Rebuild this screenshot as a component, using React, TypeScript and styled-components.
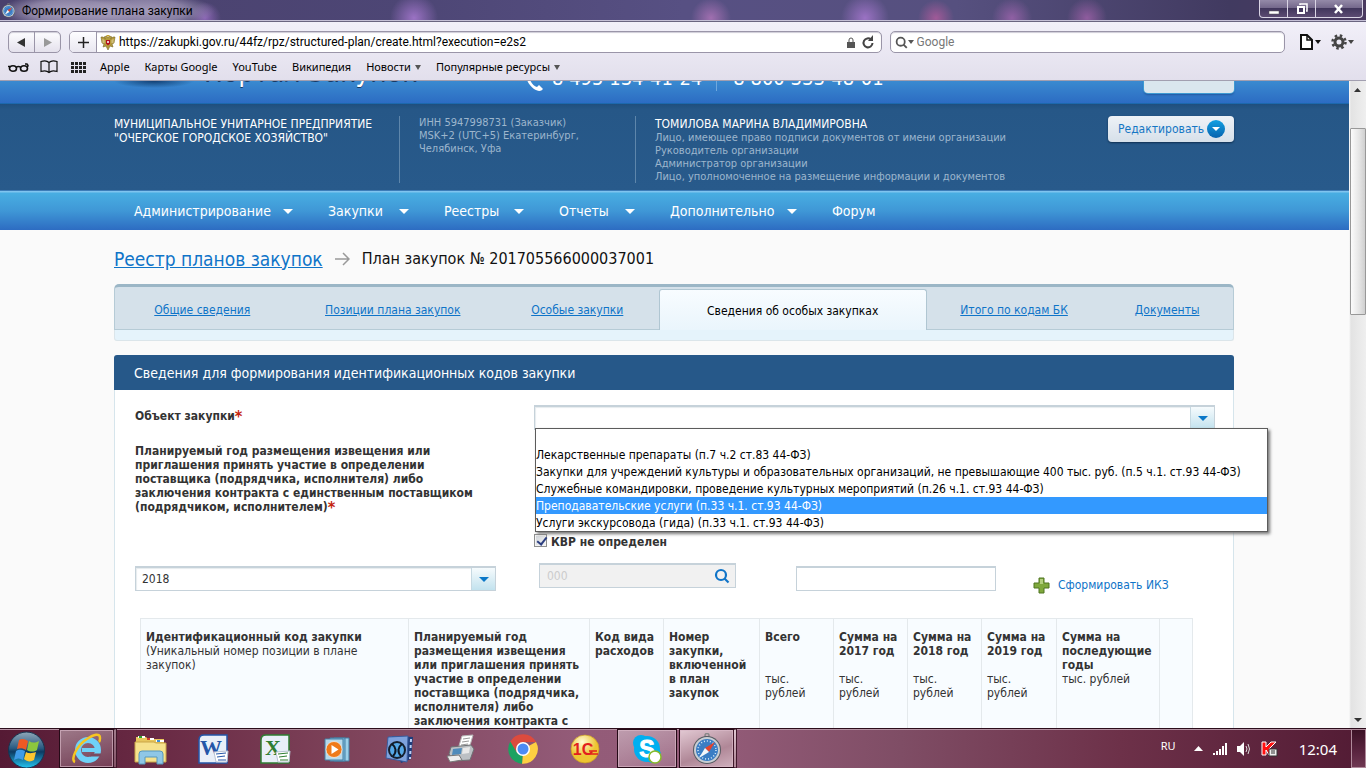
import React from 'react';
import styled, { createGlobalStyle, css } from 'styled-components';

const siteFont = `'DejaVu Sans Condensed', 'Noto Sans', sans-serif`;
const uiFont = `'Noto Sans', 'Open Sans', sans-serif`;
const barFont = `Roboto, 'Noto Sans', sans-serif`;

const GlobalStyle = createGlobalStyle`
  * { box-sizing: border-box; }
  body { margin: 0; font-family: ${siteFont}; font-size: 12px; line-height: 14px; color: #333; }
  button, input, select { font: inherit; color: inherit; margin: 0; padding: 0; border: 0; background: none; }
  a { color: #0f74c8; }
  svg { display: block; flex: none; }
`;

const Desktop = styled.div`
  height: 100vh;
  display: flex;
  flex-direction: column;
  overflow: hidden;
`;

/* ---------- browser window ---------- */

const TitleBar = styled.header`
  height: 21px;
  flex: none;
  display: flex;
  justify-content: space-between;
  border-bottom: 1px solid #c5c0d6;
  background:
    radial-gradient(ellipse 70px 18px at 70px 11px, #aba2bf, #aba2bfaa 60%, transparent),
    radial-gradient(ellipse 70px 18px at 145px 11px, #a59cbb, #a59cbbaa 60%, transparent),
    radial-gradient(circle 16px at 205px 18px, #8a64b4, transparent),
    radial-gradient(circle 24px at 414px 18px, #9b72c4, transparent),
    radial-gradient(circle 20px at 711px 18px, #a06fb0, transparent),
    radial-gradient(circle 24px at 865px 18px, #9b72c4, transparent),
    radial-gradient(circle 18px at 936px 18px, #a05a98, transparent),
    radial-gradient(circle 20px at 1012px 18px, #9060a4, transparent),
    radial-gradient(circle 20px at 1087px 18px, #8f5c9e, transparent),
    linear-gradient(90deg, #4a416d, #4d4675 30%, #575083 50%, #56507f 70%, #413a60 90%, #4a3a60);
`;
const WindowTitle = styled.div`
  display: flex;
  align-items: center;
  gap: 6px;
  padding-left: 1px;
  font: 12px/20px ${barFont};
  padding-top: 1px;
  color: #000;
`;
const WindowButtons = styled.div`
  display: flex;
  height: 18px;
  margin-right: 3px;
  border: 1px solid #d9d4e4;
  border-top: 0;
  border-radius: 0 0 4px 4px;
  background: linear-gradient(#948aa8, #75698c 45%, #41365c 50%, #5b4b72);
`;
const WindowButton = styled.button<{ $w: number }>`
  width: ${p => p.$w}px;
  display: flex;
  align-items: center;
  justify-content: center;
  border-right: 1px solid #d9d4e4;
  &:last-child { border-right: 0; }
`;
const Chrome = styled.div`
  flex: none;
  height: 60px;
  padding-top: 9px;
  border-top: 1px solid #6a6580;
  border-bottom: 1px solid #a29fb0;
  background: linear-gradient(#f2f0f9, #e2dfec);
  font: 12px/16px ${barFont};
  color: #000;
`;
const NavRow = styled.div`
  display: flex;
  align-items: center;
  padding: 0 12px 0 8px;
  height: 22px;
`;
const fieldFrame = css`
  display: flex;
  align-items: center;
  height: 22px;
  border: 1px solid #9a95a8;
  border-radius: 5px;
  background: #fff;
  box-shadow: inset 0 1px 1px #cfccd8;
`;
const BackForward = styled.div`
  ${fieldFrame}
  width: 53px;
  margin-right: 8px;
  background: linear-gradient(#fdfdff, #e4e1ec);
`;
const ChromeButton = styled.button<{ $line?: boolean }>`
  flex: 1;
  height: 20px;
  display: flex;
  align-items: center;
  justify-content: center;
  border-right: ${p => (p.$line ? '1px solid #9a95a8' : '0')};
`;
const AddressBar = styled.div`
  ${fieldFrame}
  flex: 812 1 0;
  overflow: hidden;
  padding-right: 6px;
  margin-right: 8px;
`;
const AddButton = styled.button`
  width: 27px;
  height: 20px;
  display: flex;
  align-items: center;
  justify-content: center;
  border-right: 1px solid #9a95a8;
  background: linear-gradient(#fdfdff, #e9e7f0);
  margin-right: 3px;
`;
const BarInput = styled.input`
  flex: 1;
  min-width: 0;
  height: 18px;
  padding-left: 3px;
  outline: 0;
  &::placeholder { color: #777; opacity: 1; }
`;
const SearchBar = styled.div`
  ${fieldFrame}
  flex: 393 1 0;
  padding-left: 4px;
`;
const ToolMenus = styled.div`
  display: flex;
  align-items: center;
  gap: 10px;
  margin-left: 15px;
`;
const ToolMenu = styled.button`
  display: flex;
  align-items: center;
  gap: 1px;
`;
const Bookmarks = styled.nav`
  display: flex;
  align-items: center;
  gap: 15px;
  height: 28px;
  padding-left: 8px;
  font: 11px/16px ${uiFont};
  svg { margin-right: -4px; }
`;
const Bookmark = styled.a`
  display: flex;
  align-items: center;
  gap: 4px;
  color: #000;
  text-decoration: none;
`;
const Caret = styled.i<{ $c: string; $s?: number; $h?: number }>`
  display: inline-block;
  border: ${p => p.$s ?? 3}px solid transparent;
  border-top: ${p => p.$h ?? 4}px solid ${p => p.$c};
  border-bottom: 0;
`;

/* ---------- site ---------- */

const Viewport = styled.div`
  flex: 1;
  min-height: 0;
  display: flex;
  overflow: hidden;
`;
const Page = styled.div`
  flex: 1;
  min-width: 0;
  overflow: hidden;
  background: #fafafa;
`;
const gutter = css`padding-left: 114px; padding-right: 115px;`;

const Masthead = styled.div`
  ${gutter}
  height: 23px;
  display: flex;
  align-items: flex-end;
  overflow: hidden;
  border-bottom: 1px solid #1c68ad;
  background: linear-gradient(#3a8ad0, #2c6cc3);
  color: #fff;
`;
const LogoShade = styled.div`
  width: 81px;
  height: 22px;
  margin-right: 9px;
  background: radial-gradient(ellipse 40px 7px at 40px 0, #123f73, transparent);
`;
const SiteName = styled.div`
  width: 322px;
  font-size: 28px;
  line-height: 32px;
  margin-bottom: 15px;
  white-space: nowrap;
  text-shadow: 0 1px 0 #173a66;
`;
const Phones = styled.div`
  display: flex;
  font-size: 20px;
  line-height: 22px;
  margin-bottom: 12px;
  white-space: pre;
  flex: 1;
  span + span { border-left: 1px solid #6fa9de; margin-left: 14px; padding-left: 16px; }
  svg { margin: 4px 9px 0 0; }
`;
const HeaderButton = styled.button`
  width: 90px;
  height: 22px;
  margin-bottom: 10px;
  background: #dae6ee;
  border-radius: 4px;
  box-shadow: 0 0 0 1px #3d9ad2, 0 2px 2px #2358a0;
`;
const OrgBand = styled.div`
  ${gutter}
  display: flex;
  height: 86px;
  padding-top: 12px;
  background: linear-gradient(#1f4f7e, #265787 6px, #285a8b);
  color: #9db6cd;
  font-size: 11px;
  line-height: 13px;
`;
const OrgColumn = styled.div<{ $w?: number; $line?: boolean }>`
  flex: ${p => (p.$w ? `0 0 ${p.$w}px` : '1')};
  height: 67px;
  padding-left: ${p => (p.$line ? '19px' : '0')};
  border-left: ${p => (p.$line ? '1px solid #5e86ab' : '0')};
`;
const OrgName = styled.div`
  color: #fff;
  font-size: 12px;
  line-height: 14px;
  padding-top: 1px;
`;
const EditButton = styled.button`
  width: 126px;
  height: 26px;
  display: flex;
  align-items: center;
  justify-content: space-between;
  padding: 0 9px 0 10px;
  border-radius: 4px;
  background: linear-gradient(#eef2f7, #d6e0ea);
  box-shadow: 0 1px 2px #0f2f50;
  color: #1576c4;
  font-size: 12px;
`;
const EditDot = styled.span`
  width: 18px;
  height: 18px;
  border-radius: 9px;
  display: flex;
  align-items: center;
  justify-content: center;
  background: linear-gradient(#12a0e2, #0662ae);
`;
const MainNav = styled.nav`
  ${gutter}
  display: flex;
  align-items: center;
  height: 40px;
  border-top: 1px solid #3d7db8;
  background: linear-gradient(#7fc4ef, #7fc4ef 1px, #48aee2 2px, #3f97d6 20px, #2d6cc2);
`;
const NavItem = styled.a<{ $w: number }>`
  width: ${p => p.$w}px;
  display: flex;
  align-items: center;
  justify-content: space-between;
  margin-right: 35px;
  &:first-child { margin-left: 20px; }
  color: #fff;
  font-size: 14px;
  line-height: 20px;
  text-decoration: none;
  i { margin-top: 2px; }
`;
const Main = styled.main`
  ${gutter}
`;
const Crumbs = styled.div`
  display: flex;
  align-items: center;
  height: 54px;
  padding-top: 4px;
  gap: 12px;
  font-size: 16px;
  line-height: 24px;
  color: #111;
  a { font-size: 19px; }
`;
const Tabs = styled.div`
  display: flex;
  height: 46px;
  border: 1px solid #b6cbd6;
  border-top: 3px solid #9bb6c6;
  border-radius: 5px 5px 0 0;
  background: #d5e1ea;
  padding-top: 2px;
`;
const Tab = styled.a<{ $grow: number; $active?: boolean }>`
  flex: ${p => p.$grow} 1 0;
  text-align: center;
  line-height: 43px;
  height: 41px;
  ${p =>
    p.$active &&
    css`
      color: #000;
      text-decoration: none;
      border: 1px solid #b0c6d2;
      border-bottom: 0;
      border-radius: 3px 3px 0 0;
      background: linear-gradient(#f8fcff, #eaf5fc);
    `}
`;
const TabFoot = styled.div`
  height: 11px;
  margin-bottom: 14px;
  border: 1px solid #dbe5ea;
  border-top: 0;
  border-radius: 0 0 3px 3px;
  background: #e5f3fb;
`;
const PanelTitle = styled.h2`
  margin: 0;
  height: 35px;
  padding-left: 20px;
  border-radius: 3px 3px 0 0;
  background: #265889;
  color: #fff;
  font-size: 14px;
  font-weight: 400;
  line-height: 36px;
`;
const PanelBody = styled.div`
  border: 1px solid #d6e5ec;
  border-top: 0;
  padding: 15px 18px 40px 20px;
  background: #fff;
`;
const FormGrid = styled.div`
  display: grid;
  grid-template-columns: 379px 1fr;
  column-gap: 20px;
  row-gap: 13px;
  margin-bottom: 14px;
`;
const FieldLabel = styled.label`
  font-weight: 700;
  padding-top: 4px;
  em { color: #c4240c; font-style: normal; font-size: 16px; line-height: 12px; vertical-align: -2px; }
`;
const YearLabel = styled(FieldLabel)`
  padding-top: 1px;
  height: 106px;
  max-width: 346px;
`;
const SelectBox = styled.div<{ $w?: number }>`
  position: relative;
  display: flex;
  height: 25px;
  width: ${p => (p.$w ? `${p.$w}px` : '100%')};
  border: 1px solid #c6d2da;
  border-top-width: 2px;
  background: #fff;
  box-shadow: inset 1px 1px 1px #e6ebee;
  select { flex: 1; appearance: none; padding-left: 6px; outline: 0; }
`;
const SelectArrow = styled.span`
  width: 24px;
  display: flex;
  align-items: center;
  justify-content: center;
  border-left: 1px solid #c6d9e2;
  background: linear-gradient(#f6fbfd, #c2e2ee);
  pointer-events: none;
`;
const OptionList = styled.ul`
  position: absolute;
  z-index: 2;
  top: 21px;
  left: 0;
  margin: 0;
  padding: 0;
  list-style: none;
  min-width: 733px;
  border: 1px solid #5c5c5c;
  background: #fff;
  color: #000;
  box-shadow: 2px 2px 3px #777;
  white-space: nowrap;
`;
const Option = styled.li<{ $on?: boolean }>`
  height: 17px;
  line-height: 16px;
  padding-top: 1px;
  ${p => p.$on && 'background: #3399ff; color: #fff;'}
`;
const CheckRow = styled.label`
  display: flex;
  align-items: center;
  align-self: end;
  gap: 4px;
  height: 15px;
  font-weight: 700;
`;
const Check = styled.input`
  appearance: none;
  width: 13px;
  height: 13px;
  margin-bottom: 3px;
  border: 1px solid #8e8f8f;
  background: linear-gradient(135deg, #cfd3d8, #f6f6f6);
  box-shadow: inset 0 0 0 1px #f4f4f4;
  &:checked::after {
    content: '';
    display: block;
    width: 4px;
    height: 8px;
    margin: 0 0 0 4px;
    border: solid #2c3f80;
    border-width: 0 2px 2px 0;
    transform: rotate(38deg);
  }
`;
const ControlRow = styled.div`
  display: flex;
  align-items: flex-end;
  height: 28px;
  margin-bottom: 27px;
`;
const LookupBox = styled.div`
  align-self: flex-start;
  display: flex;
  align-items: center;
  width: 197px;
  height: 25px;
  margin: 0 60px 0 43px;
  padding: 0 5px 0 7px;
  border: 1px solid #c6d2da;
  border-top-width: 2px;
  background: #f1f1f1;
  input { flex: 1; min-width: 0; color: #ccc; }
`;
const TextField = styled.input`
  width: 200px;
  height: 25px;
  border: 1px solid #c6d2da;
  border-top-width: 2px;
  margin-right: 37px;
  background: #fff;
`;
const ActionLink = styled.a`
  display: flex;
  align-items: center;
  gap: 8px;
  height: 16px;
  text-decoration: none;
  margin-bottom: -2px;
`;
const TableWrap = styled.div`
  padding: 0 22px 0 5px;
`;
const CodesTable = styled.table`
  width: 100%;
  table-layout: fixed;
  border-collapse: collapse;
  background: #f8fcff;
  th {
    height: 190px;
    padding: 11px 6px 0 5px;
    border: 1px solid #e4e9ec;
    text-align: left;
    vertical-align: top;
  }
`;
const HeadText = styled.div<{ $tall?: boolean }>`
  min-height: ${p => (p.$tall ? '42px' : '0')};
`;
const HeadNote = styled.div`
  font-weight: 400;
`;

const ScrollBar = styled.div`
  width: 17px;
  display: flex;
  flex-direction: column;
  justify-content: space-between;
  background: linear-gradient(90deg, #fafafa, #e3e3e3 2px, #efefef);
`;
const ScrollStep = styled.div`
  height: 17px;
  display: flex;
  align-items: center;
  justify-content: center;
`;
const ScrollTrack = styled.div`
  flex: 1;
  padding-top: 30px;
`;
const ScrollThumb = styled.div`
  width: 16px;
  height: 187px;
  margin-left: 1px;
  border: 1px solid #989898;
  border-radius: 1px;
  background: linear-gradient(90deg, #fbfbfb, #e4e4e4 60%, #cfcfcf);
`;

/* ---------- task bar ---------- */

const TaskBar = styled.footer`
  flex: none;
  height: 40px;
  display: flex;
  border-top: 1px solid #2b0d1b;
  box-shadow: inset 0 1px 0 #b693a4;
  background: linear-gradient(90deg, #551a34, #6a2b45 12%, #7d4259 25%, #935b78 42%, #945c79 52%, #7f4d65 66%, #6d3149 82%, #521b34);
`;
const StartButton = styled.button`
  width: 58px;
  padding-left: 7px;
`;
const TaskButton = styled.button<{ $state?: 'open' | 'active'; $stack?: boolean }>`
  width: 60px;
  height: 39px;
  margin: 0 1px;
  display: flex;
  align-items: center;
  justify-content: center;
  ${p =>
    p.$state &&
    css`
      border: 1px solid #250a17;
      box-shadow: inset 0 0 0 1px #d9b9c8aa;
      background: ${p.$state === 'active'
        ? 'linear-gradient(160deg, #e2c9d3, #b08797 60%, #cfb0bd)'
        : 'linear-gradient(160deg, #ffffff66, #ffffff1c)'};
    `}
  ${p => p.$stack && 'border-right: 4px double #40182a; width: 58px; margin-right: 3px;'}
`;
const Tray = styled.div`
  margin-left: auto;
  display: flex;
  align-items: center;
  color: #fff;
  font-family: ${uiFont};
  font-size: 11px;
`;
const Language = styled.span`
  margin-right: 18px;
  padding-bottom: 6px;
`;
const TrayIcons = styled.div`
  display: flex;
  align-items: center;
  gap: 9px;
  margin-right: 21px;
`;
const Clock = styled.time`
  font-size: 15px;
  line-height: 20px;
  margin-right: 14px;
`;
const ShowDesktop = styled.button`
  width: 15px;
  height: 39px;
  border: 1px solid #b08a9b;
  background: linear-gradient(#3c1226, #5b2540 60%, #6f3852);
`;

/* ---------- drawings ---------- */

const Compass = ({ s }: { s: number }) => (
  <svg width={s} height={s} viewBox="0 0 32 32">
    <circle cx="16" cy="2.5" r="2" fill="none" stroke="#888" strokeWidth="1.5" />
    <circle cx="16" cy="17" r="14" fill="#555b62" />
    <circle cx="16" cy="17" r="13" fill="#c9ced3" />
    <circle cx="16" cy="17" r="11" fill="#3a7dc4" />
    <circle cx="16" cy="17" r="9" fill="none" stroke="#d4e8f8" strokeWidth="1.5" strokeDasharray="1 2" />
    <path d="M24 9 18 19 14 15Z" fill="#e2432e" />
    <path d="M8 25 18 19 14 15Z" fill="#f3f6f9" />
  </svg>
);
const StartOrb = () => (
  <svg width="40" height="38" viewBox="0 0 40 38">
    <defs>
      <linearGradient id="orb" x1="0" y1="0" x2="0" y2="1">
        <stop offset="0" stopColor="#8fa7b8" /><stop offset=".45" stopColor="#2a5b82" />
        <stop offset=".55" stopColor="#0c3a62" /><stop offset="1" stopColor="#25c6f2" />
      </linearGradient>
    </defs>
    <circle cx="19.500" cy="20" r="18" fill="url(#orb)" stroke="#163450" />
    <path d="M12 10c3-2 6-1 9 1l-2 9c-3-2-6-2-9-1z" fill="#ee5a24" />
    <path d="M22 11c3 2 6 2 10 0l-2 9c-3 2-7 2-10 0z" fill="#8cc63e" />
    <path d="M9 21c3-2 6-1 9 0l-2 9c-3-2-6-2-9 0z" fill="#3f9be8" />
    <path d="M19 22c3 2 7 1 10 0l-2 8c-3 2-7 2-10-1z" fill="#fdc62f" />
  </svg>
);
const ExplorerIcon = () => (
  <svg width="32" height="32" viewBox="0 0 32 32">
    <circle cx="17" cy="17" r="10" fill="none" stroke="#6fd2f8" strokeWidth="6" />
    <path d="M11 17h17" stroke="#6fd2f8" strokeWidth="4" />
    <path d="M20 20.500h10v3H19z" fill="#7a4a60" />
    <path d="M4 29C-1 27 6 12 16 6c7-5 13-6 13-1 0 1 0 3-1 4" fill="none" stroke="#f6c521" strokeWidth="2.500" />
  </svg>
);
const FolderIcon = () => (
  <svg width="34" height="32" viewBox="0 0 34 32">
    <path d="M2 4h10l2 2h16v6H2z" fill="#e7c65c" />
    <path d="M4 3h7v2H4z" fill="#fff" /><path d="M5 3h3v2H5z" fill="#2ea12e" />
    <path d="M13 5h7v2h-7z" fill="#fff" /><path d="M13 5h3v2h-3z" fill="#d33b2b" />
    <path d="M22 7h8v2h-8z" fill="#fff" /><path d="M23 7h3v2h-3z" fill="#3b8fd9" />
    <path d="M1 9h19l2 1h10v19H1z" fill="#f6e28d" stroke="#c9a548" />
    <path d="M5 31V21q0-3 3-3h18q3 0 3 3v10h-6v-7H11v7z" fill="#8fc7e6" stroke="#5798bd" />
  </svg>
);
const OfficeIcon = ({ c, letter }: { c: string; letter: 'W' | 'X' }) => (
  <svg width="32" height="32" viewBox="0 0 32 32">
    <path d="M7 2h23v28H2V7q0-5 5-5z" fill="#e9eff8" stroke={c} strokeWidth="1.500" />
    <text x="14" y="22" textAnchor="middle" fontFamily="'Liberation Serif', serif" fontSize="22" fontWeight="700" fill={c}>{letter}</text>
    <path d="m17 19 14-1-1 11H19z" fill="#fff" stroke="#b9c3d4" />
    <path d="m19 21 10-1m-9 4 8-1m-7 4h8" stroke={c} />
  </svg>
);
const PlayerIcon = () => (
  <svg width="32" height="32" viewBox="0 0 32 32">
    <path d="M13 5h15v23H13z" fill="#9cd0ea" stroke="#457ea3" /><path d="M9 5h15v23H9z" fill="#7db9dc" stroke="#457ea3" />
    <path d="M4 6h18v21H4z" fill="#b5d9ec" stroke="#457ea3" />
    <circle cx="13" cy="16.500" r="8" fill="#ef7a1a" stroke="#fff" strokeWidth=".6" /><path d="m10.500 12 7 4.500-7 4.500z" fill="#fff" />
  </svg>
);
const FilmIcon = () => (
  <svg width="32" height="32" viewBox="0 0 32 32">
    <path d="m9 3 21 1-2 22-10 4z" fill="#1e3d7c" /><path d="m28 6-1 20" stroke="#bcd0f5" strokeWidth="2" strokeDasharray="3 3" />
    <path d="m5 4 20-1-1 26-21-4z" fill="#7ea2dd" stroke="#3a5c9d" />
    <circle cx="14" cy="17" r="9" fill="#14202f" /><circle cx="14" cy="17" r="7" fill="#56a8e6" />
    <path d="M9 11c4 3 5 8 1 12m9-12c-4 3-5 8-1 12" fill="none" stroke="#0d1725" strokeWidth="2" />
  </svg>
);
const FaxIcon = () => (
  <svg width="32" height="32" viewBox="0 0 32 32">
    <path d="m17 3 11-1-4 14H13z" fill="#fff" stroke="#b7b7b7" /><path d="m18 6 7-1m-8 4 7-1m-8 4 7-1" stroke="#999" />
    <path d="m6 14 20-2 3 4-4 11-16 1-5-7z" fill="#bcc0c4" stroke="#6d7073" />
    <path d="m8 16 9-1-1 6-9 1z" fill="#4f8bbb" /><path d="m18 15 7-1-1 6-7 1z" fill="#e9e9e9" />
    <path d="m2 23 12-1 3 5-12 2z" fill="#eee" stroke="#777" />
  </svg>
);
const ChromeIcon = () => (
  <svg width="32" height="32" viewBox="0 0 32 32">
    <path d="M16 16 29 9a14.700 14.700 0 0 1-14 21.700z" fill="#fdcf41" />
    <path d="M16 16 15 30.700A14.700 14.700 0 0 1 3.300 8.500z" fill="#1ca261" />
    <path d="M16 9h13a14.700 14.700 0 0 0-25.700-.500l6.500 11z" fill="#dd4b3e" />
    <circle cx="16" cy="16" r="7" fill="#fff" /><circle cx="16" cy="16" r="5.500" fill="#4c8bf5" />
  </svg>
);
const OneCIcon = () => (
  <svg width="32" height="32" viewBox="0 0 32 32">
    <defs><radialGradient id="gold" cx=".4" cy=".25"><stop offset="0" stopColor="#fffbd6" /><stop offset="1" stopColor="#eec532" /></radialGradient></defs>
    <circle cx="16" cy="16" r="14" fill="url(#gold)" stroke="#c99b22" strokeWidth=".7" />
    <text x="14" y="22" textAnchor="middle" fontFamily="'Liberation Sans', sans-serif" fontSize="16" fontWeight="700" fill="#e2201d">1С</text>
    <path d="M19 21h10M20 18h8" stroke="#e2201d" strokeWidth="1.500" />
  </svg>
);
const SkypeIcon = () => (
  <svg width="32" height="32" viewBox="0 0 32 32">
    <circle cx="10" cy="10" r="8" fill="#00aff0" /><circle cx="22" cy="22" r="8" fill="#00aff0" /><circle cx="16" cy="16" r="13" fill="#00aff0" />
    <text x="16" y="24" textAnchor="middle" fontFamily="'Liberation Sans', sans-serif" fontSize="23" fontWeight="700" fill="#fff" stroke="#fff">S</text>
    <circle cx="24" cy="24" r="6" fill="#fff" stroke="#86ba28" strokeWidth="1.500" />
  </svg>
);
const Eagle = () => (
  <svg width="16" height="16" viewBox="0 0 16 16">
    <path d="M8 4 6.500 2 4 3l1.500 2L3 3 1 3l1 6 2 1-1 3 3-1 2 4 2-4 3 1-1-3 2-1 1-6h-2l-2.500 2L12 3 9.500 2z" fill="#b49a3c" stroke="#7c6a25" strokeWidth=".6" />
    <path d="M6 1h4L8 3z" fill="#c8a22e" /><path d="M3 5v4m1-3v3m9-4v4m-1-3v3" stroke="#f0e6b8" strokeWidth=".6" />
    <path d="M6 6h4v3.500L8 11.500 6 9.500z" fill="#b3121d" /><circle cx="8" cy="8" r="1" fill="#fff" />
  </svg>
);
const Magnifier = ({ s, c }: { s: number; c: string }) => (
  <svg width={s} height={s} viewBox="0 0 16 16" fill="none" stroke={c} strokeWidth="2.200">
    <circle cx="7" cy="7" r="5" /><path d="m10.500 10.500 4 4" />
  </svg>
);

/* ---------- data ---------- */

const tabs = [
  { text: 'Общие сведения', grow: 175 },
  { text: 'Позиции плана закупок', grow: 207 },
  { text: 'Особые закупки', grow: 163 },
  { text: 'Сведения об особых закупках', grow: 267, active: true },
  { text: 'Итого по кодам БК', grow: 175 },
  { text: 'Документы', grow: 132 },
];
const nav = [
  { text: 'Администрирование', w: 159 },
  { text: 'Закупки', w: 81 },
  { text: 'Реестры', w: 80 },
  { text: 'Отчеты', w: 76 },
  { text: 'Дополнительно', w: 127 },
];
const options = [
  '\u00a0',
  'Лекарственные препараты (п.7 ч.2 ст.83 44-ФЗ)',
  'Закупки для учреждений культуры и образовательных организаций, не превышающие 400 тыс. руб. (п.5 ч.1. ст.93 44-ФЗ)',
  'Служебные командировки, проведение культурных мероприятий (п.26 ч.1. ст.93 44-ФЗ)',
  'Преподавательские услуги (п.33 ч.1. ст.93 44-ФЗ)',
  'Услуги экскурсовода (гида) (п.33 ч.1. ст.93 44-ФЗ)',
];
const columns = [
  { w: 268, head: 'Идентификационный код закупки', note: '(Уникальный номер позиции в плане закупок)' },
  { w: 181, head: 'Планируемый год размещения извещения или приглашения принять участие в определении поставщика (подрядчика, исполнителя) либо заключения контракта с единственным поставщиком' },
  { w: 74, head: 'Код вида расходов' },
  { w: 96, head: 'Номер закупки, включенной в план закупок' },
  { w: 74, head: 'Всего', note: 'тыс. рублей', tall: true },
  { w: 74, head: 'Сумма на 2017 год', note: 'тыс. рублей', tall: true },
  { w: 74, head: 'Сумма на 2018 год', note: 'тыс. рублей', tall: true },
  { w: 75, head: 'Сумма на 2019 год', note: 'тыс. рублей', tall: true },
  { w: 103, head: 'Сумма на последующие годы', note: 'тыс. рублей', tall: true },
  { w: 33, head: '' },
];

export default function App() {
  return (
    <Desktop>
      <GlobalStyle />
      <TitleBar>
        <WindowTitle><Compass s={15} />Формирование плана закупки</WindowTitle>
        <WindowButtons>
          <WindowButton $w={28} aria-label="Свернуть">
            <svg width="12" height="12"><path d="M1 8h10v3H1z" fill="#fff" stroke="#555" strokeWidth=".5" /></svg>
          </WindowButton>
          <WindowButton $w={28} aria-label="Восстановить">
            <svg width="12" height="12" fill="none" stroke="#fff"><path d="M4 2V1h7v7h-1" strokeWidth="1.500" /><path d="M2 4h6v6H2z" strokeWidth="2" /></svg>
          </WindowButton>
          <WindowButton $w={46} aria-label="Закрыть">
            <svg width="12" height="12"><path d="m2 2 7 8M9 2l-7 8" stroke="#fff" strokeWidth="2.500" /></svg>
          </WindowButton>
        </WindowButtons>
      </TitleBar>

      <Chrome>
        <NavRow>
          <BackForward>
            <ChromeButton $line aria-label="Назад"><svg width="9" height="9"><path d="M8 0v9L0 4.500z" fill="#333" /></svg></ChromeButton>
            <ChromeButton aria-label="Вперёд"><svg width="9" height="9"><path d="M1 0v9l8-4.500z" fill="#999" /></svg></ChromeButton>
          </BackForward>
          <AddressBar>
            <AddButton aria-label="Добавить закладку"><svg width="11" height="11"><path d="M5.500 0v11M0 5.500h11" stroke="#222" strokeWidth="1.500" /></svg></AddButton>
            <Eagle />
            <BarInput aria-label="Адрес" defaultValue="https://zakupki.gov.ru/44fz/rpz/structured-plan/create.html?execution=e2s2" />
            <svg width="8" height="11" viewBox="0 0 8 11"><path d="M2 5V3q0-2 2-2t2 2v2" fill="none" stroke="#555" /><path d="M0 5h8v6H0z" fill="#555" /></svg>
            <svg width="20" height="14" viewBox="0 0 20 14"><path d="M16 4.500A4.500 4.500 0 1 0 17.500 8" fill="none" stroke="#444" strokeWidth="2" /><path d="M13 6h5V0z" fill="#444" /></svg>
          </AddressBar>
          <SearchBar>
            <Magnifier s={13} c="#555" /><Caret $c="#555" />
            <BarInput aria-label="Поиск" placeholder="Google" />
          </SearchBar>
          <ToolMenus>
            <ToolMenu aria-label="Страница">
              <svg width="14" height="16" viewBox="0 0 14 16"><path d="M1 1h6l5 5v9H1z" fill="#fff" stroke="#111" strokeWidth="2" /><path d="M7 1v5h5" fill="none" stroke="#111" strokeWidth="1.500" /></svg>
              <Caret $c="#111" />
            </ToolMenu>
            <ToolMenu aria-label="Настройки">
              <svg width="16" height="16" viewBox="0 0 16 16" fill="none" stroke="#444"><circle cx="8" cy="8" r="4" strokeWidth="3" /><circle cx="8" cy="8" r="6.500" strokeWidth="2.500" strokeDasharray="2.500 2.605" /></svg>
              <Caret $c="#444" />
            </ToolMenu>
          </ToolMenus>
        </NavRow>
        <Bookmarks>
          <svg width="21" height="12" viewBox="0 0 21 12" fill="none" stroke="#111" strokeWidth="1.600"><ellipse cx="5" cy="7.500" rx="3.500" ry="2.800" /><ellipse cx="16" cy="7.500" rx="3.500" ry="2.800" /><path d="M8 6.500q2.500-2 5 0M2 5.500H0M19 6q2-1 0-3h-2" /></svg>
          <svg width="18" height="14" viewBox="0 0 18 14" fill="none" stroke="#111" strokeWidth="1.200"><path d="M9 2.500C7 .5 4 .5 1 1.500v10c3-1 6-1 8 1 2-2 5-2 8-1v-10c-3-1-6-1-8 1zM9 2.500v10" /></svg>
          <svg width="20" height="11" viewBox="0 0 20 11" fill="#222"><path d="M2 0h3v3H2zm4 0h3v3H6zm4 0h3v3h-3zm4 0h3v3h-3zM2 4h3v3H2zm4 0h3v3H6zm4 0h3v3h-3zm4 0h3v3h-3zM2 8h3v3H2zm4 0h3v3H6zm4 0h3v3h-3zm4 0h3v3h-3z" /></svg>
          <Bookmark href="#apple">Apple</Bookmark>
          <Bookmark href="#maps">Карты Google</Bookmark>
          <Bookmark href="#youtube">YouTube</Bookmark>
          <Bookmark href="#wiki">Википедия</Bookmark>
          <Bookmark href="#news">Новости<Caret $c="#555" $h={5} /></Bookmark>
          <Bookmark href="#popular">Популярные ресурсы<Caret $c="#555" $h={5} /></Bookmark>
        </Bookmarks>
      </Chrome>

      <Viewport>
        <Page>
          <Masthead>
            <LogoShade />
            <SiteName>Портал Закупок</SiteName>
            <Phones>
              <svg width="17" height="20" viewBox="0 0 17 20"><path d="M3 1 6 7 4 9c2 4 4 6 7 7l2-2 4 4c-2 3-6 2-9 0C3 14-1 8 1 3z" fill="#fff" /></svg>
              <span>8 495 134-41-24</span>
              <span>8 800 333-48-01</span>
            </Phones>
            <HeaderButton aria-label="Выход" />
          </Masthead>
          <OrgBand>
            <OrgColumn $w={285}>
              <OrgName>МУНИЦИПАЛЬНОЕ УНИТАРНОЕ ПРЕДПРИЯТИЕ<br />"ОЧЕРСКОЕ ГОРОДСКОЕ ХОЗЯЙСТВО"</OrgName>
            </OrgColumn>
            <OrgColumn $w={236} $line>
              ИНН 5947998731 (Заказчик)<br />MSK+2 (UTC+5) Екатеринбург,<br />Челябинск, Уфа
            </OrgColumn>
            <OrgColumn $line>
              <OrgName>ТОМИЛОВА МАРИНА ВЛАДИМИРОВНА</OrgName>
              Лицо, имеющее право подписи документов от имени организации<br />
              Руководитель организации<br />
              Администратор организации<br />
              Лицо, уполномоченное на размещение информации и документов
            </OrgColumn>
            <EditButton>Редактировать<EditDot><Caret $c="#fff" $s={4} /></EditDot></EditButton>
          </OrgBand>
          <MainNav>
            {nav.map(n => (
              <NavItem key={n.text} href="#menu" $w={n.w}>{n.text}<Caret $c="#fff" $s={5} $h={5} /></NavItem>
            ))}
            <NavItem href="#forum" $w={60}>Форум</NavItem>
          </MainNav>
          <Main>
            <Crumbs>
              <a href="#plans">Реестр планов закупок</a>
              <svg width="15" height="14" viewBox="0 0 15 14" fill="none" stroke="#999" strokeWidth="1.500"><path d="M0 7h14M8 1l6 6-6 6" /></svg>
              <span>План закупок № 201705566000037001</span>
            </Crumbs>
            <Tabs>
              {tabs.map(t => (
                <Tab key={t.text} href="#tab" $grow={t.grow} $active={t.active}>{t.text}</Tab>
              ))}
            </Tabs>
            <TabFoot />
            <PanelTitle>Сведения для формирования идентификационных кодов закупки</PanelTitle>
            <PanelBody>
              <FormGrid>
                <FieldLabel htmlFor="object">Объект закупки<em>*</em></FieldLabel>
                <SelectBox>
                  <select id="object"><option /></select>
                  <SelectArrow><Caret $c="#0b78c8" $s={5} $h={5} /></SelectArrow>
                  <OptionList role="listbox" aria-label="Объект закупки">
                    {options.map((o, i) => (
                      <Option key={o} role="option" aria-selected={i === 4} $on={i === 4}>{o}</Option>
                    ))}
                  </OptionList>
                </SelectBox>
                <YearLabel htmlFor="year">
                  Планируемый год размещения извещения или приглашения принять участие в определении поставщика (подрядчика, исполнителя) либо заключения контракта с единственным поставщиком (подрядчиком, исполнителем)<em>*</em>
                </YearLabel>
                <CheckRow><Check type="checkbox" defaultChecked />КВР не определен</CheckRow>
              </FormGrid>
              <ControlRow>
                <SelectBox $w={361}>
                  <select id="year"><option>2018</option></select>
                  <SelectArrow><Caret $c="#0b78c8" $s={5} $h={5} /></SelectArrow>
                </SelectBox>
                <LookupBox><input aria-label="КВР" defaultValue="000" disabled /><Magnifier s={16} c="#0f74c8" /></LookupBox>
                <TextField aria-label="Номер" />
                <ActionLink href="#make">
                  <svg width="17" height="17" viewBox="0 0 17 17"><path d="M6 1h5v5h5v5h-5v5H6v-5H1V6h5z" fill="#7fa83c" stroke="#4f7420" /><path d="M7 2h3v5H2V7h5z" fill="#b3cf7f" /></svg>
                  Сформировать ИКЗ
                </ActionLink>
              </ControlRow>
              <TableWrap>
                <CodesTable>
                  <colgroup>{columns.map((c, i) => <col key={i} width={c.w} />)}</colgroup>
                  <thead>
                    <tr>
                      {columns.map((c, i) => (
                        <th key={i} scope="col">
                          <HeadText $tall={c.tall}>{c.head}</HeadText>
                          {c.note && <HeadNote>{c.note}</HeadNote>}
                        </th>
                      ))}
                    </tr>
                  </thead>
                </CodesTable>
              </TableWrap>
            </PanelBody>
          </Main>
        </Page>
        <ScrollBar>
          <ScrollStep><svg width="7" height="4"><path d="M0 4h7L3.500 0z" fill="#333" /></svg></ScrollStep>
          <ScrollTrack><ScrollThumb /></ScrollTrack>
          <ScrollStep><Caret $c="#333" $s={4} /></ScrollStep>
        </ScrollBar>
      </Viewport>

      <TaskBar>
        <StartButton aria-label="Пуск"><StartOrb /></StartButton>
        <TaskButton $state="open" $stack aria-label="Internet Explorer"><ExplorerIcon /></TaskButton>
        <TaskButton aria-label="Проводник"><FolderIcon /></TaskButton>
        <TaskButton aria-label="Word"><OfficeIcon c="#2456a8" letter="W" /></TaskButton>
        <TaskButton aria-label="Excel"><OfficeIcon c="#2f7d32" letter="X" /></TaskButton>
        <TaskButton aria-label="Media Player"><PlayerIcon /></TaskButton>
        <TaskButton aria-label="Media Player Classic"><FilmIcon /></TaskButton>
        <TaskButton aria-label="Факс"><FaxIcon /></TaskButton>
        <TaskButton aria-label="Chrome"><ChromeIcon /></TaskButton>
        <TaskButton aria-label="1С"><OneCIcon /></TaskButton>
        <TaskButton $state="open" aria-label="Skype"><SkypeIcon /></TaskButton>
        <TaskButton $state="active" $stack aria-label="Safari"><Compass s={32} /></TaskButton>
        <Tray>
          <Language>RU</Language>
          <TrayIcons>
            <svg width="9" height="5"><path d="M0 5h9L4.500 0z" fill="#fff" /></svg>
            <svg width="16" height="12"><path d="M1 10h2v2H1zm3-2h2v4H4zm3-2h2v6H7zm3-3h2v9h-2zm3-3h2v12h-2z" fill="#fff" /></svg>
            <svg width="15" height="14" viewBox="0 0 15 14"><path d="M0 4h3l4-4v14l-4-4H0z" fill="#fff" /><path d="M9 4q2 3 0 6m2-8q3 5 0 10" fill="none" stroke="#ddd" /></svg>
            <svg width="17" height="16" viewBox="0 0 17 16"><path d="M1 1h4v5l5-5h5L8 8l3 6H8L5 9v5H1z" fill="#f11" stroke="#fff" /><path d="M8 8h8v7H8z" fill="#eee" stroke="#333" /><path d="M10 10h4m-4 2h4" stroke="#333" /></svg>
          </TrayIcons>
          <Clock>12:04</Clock>
          <ShowDesktop aria-label="Показать рабочий стол" />
        </Tray>
      </TaskBar>
    </Desktop>
  );
}
